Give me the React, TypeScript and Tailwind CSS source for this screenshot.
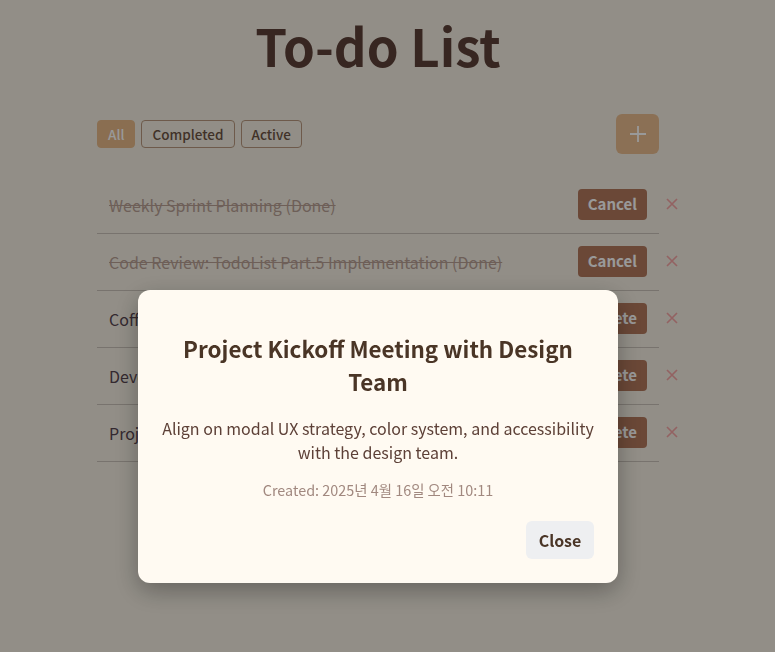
import { useState } from "react";

interface Todo {
  id: number;
  title: string;
  description: string;
  createdAt: string;
  done: boolean;
}

const todos: Todo[] = [
  { id: 1, title: "Weekly Sprint Planning", description: "", createdAt: "", done: true },
  { id: 2, title: "Code Review: TodoList Part.5 Implementation", description: "", createdAt: "", done: true },
  { id: 3, title: "Coffee Chat with Frontend Mentor", description: "", createdAt: "", done: false },
  { id: 4, title: "Develop Reusable Modal Component", description: "", createdAt: "", done: false },
  {
    id: 5,
    title: "Project Kickoff Meeting with Design Team",
    description: "Align on modal UX strategy, color system, and accessibility with the design team.",
    createdAt: "2025년 4월 16일 오전 10:11",
    done: false,
  },
];

function FilterButton({ label, active }: { label: string; active?: boolean }) {
  return (
    <button
      className={
        active
          ? "h-7 px-[10px] rounded border border-[#e6b887] bg-[#e6b887] text-white text-[13.5px] font-medium"
          : "h-7 px-[10px] rounded border border-[#b7967d] bg-transparent text-[#6c5343] text-[13.5px] font-medium"
      }
    >
      {label}
    </button>
  );
}

function TodoRow({ todo, onOpen }: { todo: Todo; onOpen: () => void }) {
  return (
    <li className="relative flex items-center">
      <div className="flex flex-1 items-center justify-between border-b border-[#c8c0b7] pt-3 pb-[13px] pl-3 pr-3">
        <span
          onClick={onOpen}
          className={
            todo.done
              ? "text-base text-[#b79e93] line-through cursor-pointer"
              : "text-base text-[#574550] cursor-pointer"
          }
        >
          {todo.done ? `${todo.title} (Done)` : todo.title}
        </span>
        <button className="h-[31px] px-[10px] rounded bg-[#b2785c] text-white text-[15px] font-semibold">
          {todo.done ? "Cancel" : "Delete"}
        </button>
      </div>
      <button className="absolute -right-[20px] top-[20px] text-[#f5a3a3]">
        <svg width="14" height="14" viewBox="0 0 14 14" fill="none" stroke="currentColor" strokeWidth="1.6">
          <path d="M2 2l10 10M12 2L2 12" />
        </svg>
      </button>
    </li>
  );
}

export default function App() {
  const [selected, setSelected] = useState<Todo | null>(todos[4]);

  return (
    <div
      className="min-h-[652px] bg-[#f3ede1] pr-[19px]"
      style={{ fontFamily: '"Noto Sans CJK KR", "Noto Sans", sans-serif' }}
    >
      <div className="mx-auto w-[562px] pt-[15px]">
        <h1 className="text-center text-[51px] leading-[60px] font-bold text-[#5d4037]">To-do List</h1>

        <div className="mt-[39px] flex items-center justify-between">
          <div className="flex gap-[6px]">
            <FilterButton label="All" active />
            <FilterButton label="Completed" />
            <FilterButton label="Active" />
          </div>
          <button className="flex h-10 w-[43px] items-center justify-center rounded-md bg-[#e8bb8e] text-white">
            <svg width="18" height="18" viewBox="0 0 18 18" fill="none" stroke="currentColor" strokeWidth="1.8">
              <path d="M9 1v16M1 9h16" />
            </svg>
          </button>
        </div>

        <ul className="mt-[23px]">
          {todos.map((t) => (
            <TodoRow key={t.id} todo={t} onOpen={() => setSelected(t)} />
          ))}
        </ul>
      </div>

      {selected && (
        <div className="fixed inset-0 flex items-start justify-center bg-black/40 pr-[19px] pt-[290px]">
          <div className="w-[480px] rounded-xl bg-[#fffaf2] px-6 pt-[42px] pb-[24px] text-center shadow-[0_8px_24px_rgba(0,0,0,0.3)]">
            <h2 className="text-[22.4px] leading-[33px] font-semibold text-[#4a3526]">{selected.title}</h2>
            <p className="mt-[18px] text-base leading-6 text-[#5d4037]">{selected.description}</p>
            <p className="mt-4 text-[14.4px] leading-5 text-[#a1887f]">Created: {selected.createdAt}</p>
            <div className="mt-[21px] flex justify-end">
              <button
                onClick={() => setSelected(null)}
                className="h-[38px] w-[68px] rounded-md bg-[#eeeff1] text-base font-bold text-[#4a3526]"
              >
                Close
              </button>
            </div>
          </div>
        </div>
      )}
    </div>
  );
}
